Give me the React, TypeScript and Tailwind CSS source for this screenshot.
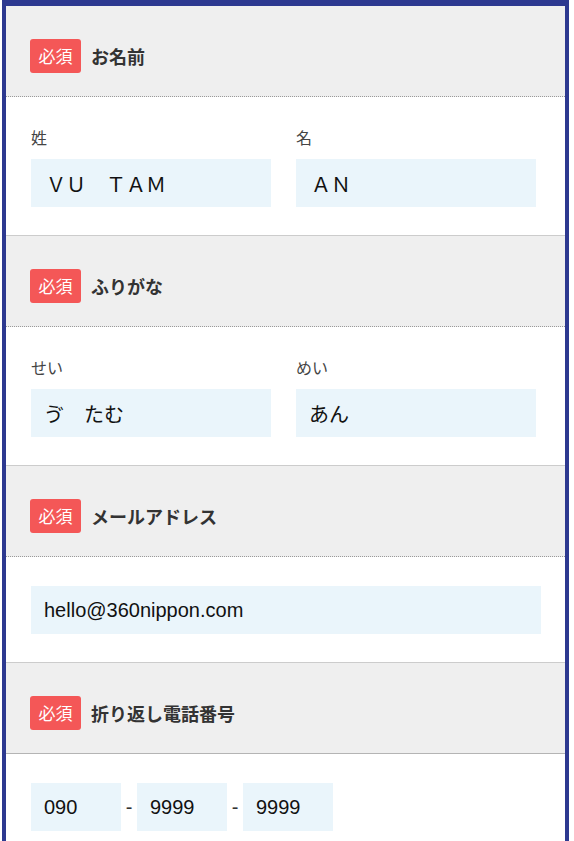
import React from "react";

const jp = "font-['Noto_Sans_CJK_JP',sans-serif]";
const latin = "font-['Liberation_Sans','Noto_Sans_CJK_JP',sans-serif]";

const SectionHeader = ({ title, solid }: { title: string; solid?: boolean }) => (
  <div
    className={`flex items-center bg-[#efefef] px-[24px] pt-[33px] pb-[23px] border-b ${
      solid ? "border-solid border-[#b4b4b4]" : "border-dotted border-[#9a9a9a]"
    }`}
  >
    <span className={`${jp} flex h-[34px] w-[51px] items-center justify-center rounded-[3px] bg-[#f45757] text-[17px] text-white`}>
      必須
    </span>
    <span className={`${jp} ml-[10px] text-[18px] font-bold text-[#333]`}>{title}</span>
  </div>
);

const Field = ({ value, className, wide }: { value: string; className?: string; wide?: boolean }) => (
  <input
    readOnly
    value={value}
    className={`h-[48px] bg-[#eaf5fb] text-[20px] text-[#111] outline-none ${wide ? "px-[15px]" : "px-[13px]"} ${className ?? ""}`}
  />
);

const NamePair = ({
  labels,
  values,
  fullWidth,
}: {
  labels: [string, string];
  values: [string, string];
  fullWidth?: boolean;
}) => (
  <div className="flex gap-[25px] border-b border-[#cccccc] px-[25px] pt-[28px] pb-[28px]">
    {[0, 1].map((i) => (
      <div key={i} className="flex w-[240px] flex-col">
        <label className={`${jp} mb-[10px] h-[24px] text-[16px] leading-[24px] text-[#444]`}>{labels[i]}</label>
        <Field value={values[i]} wide={fullWidth} className={`w-[240px] ${jp}`} />
      </div>
    ))}
  </div>
);

export default function App() {
  return (
    <div className="min-h-screen bg-white">
      <div className="ml-[2px] w-[567px] border-x-4 border-t-[6px] border-[#2d3990] bg-white">
        <SectionHeader title="お名前" />
        <NamePair labels={["姓", "名"]} values={["ＶＵ　ＴＡＭ", "ＡＮ"]} fullWidth />

        <SectionHeader title="ふりがな" />
        <NamePair labels={["せい", "めい"]} values={["ゔ　たむ", "あん"]} />

        <SectionHeader title="メールアドレス" />
        <div className="border-b border-[#cccccc] px-[25px] pt-[29px] pb-[28px]">
          <Field value="hello@360nippon.com" className={`w-[510px] ${latin}`} />
        </div>

        <SectionHeader title="折り返し電話番号" solid />
        <div className="flex items-center px-[25px] pt-[29px] pb-[28px]">
          <Field value="090" className={`w-[90px] ${latin}`} />
          <span className={`${latin} w-[16px] text-center text-[20px] text-[#333]`}>-</span>
          <Field value="9999" className={`w-[90px] ${latin}`} />
          <span className={`${latin} w-[16px] text-center text-[20px] text-[#333]`}>-</span>
          <Field value="9999" className={`w-[90px] ${latin}`} />
        </div>
      </div>
    </div>
  );
}
